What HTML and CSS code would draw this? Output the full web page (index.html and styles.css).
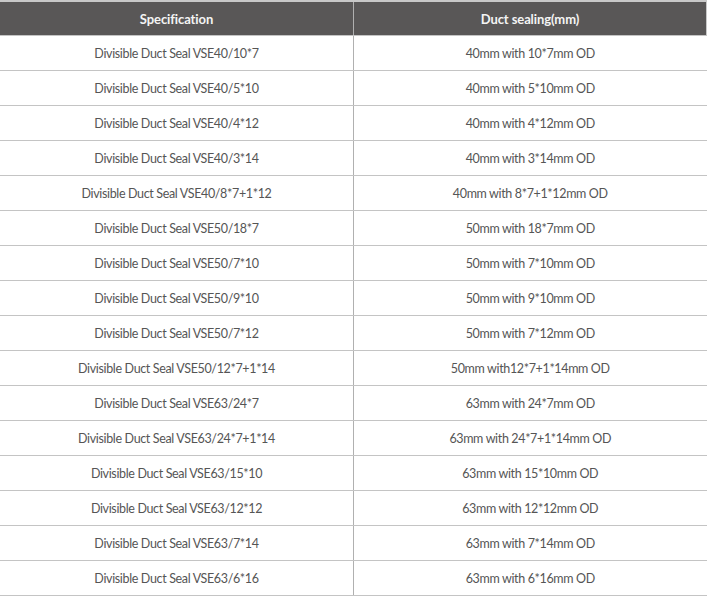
FILE: index.html
```html
<!DOCTYPE html>
<html>
<head>
<meta charset="utf-8">
<link rel="stylesheet" href="styles.css">
</head>
<body>
<table class="spec">
  <thead>
    <tr><th>Specification</th><th>Duct sealing(mm)</th></tr>
  </thead>
  <tbody>
    <tr><td>Divisible Duct Seal VSE40/10*7</td><td>40mm with 10*7mm OD</td></tr>
    <tr><td>Divisible Duct Seal VSE40/5*10</td><td>40mm with 5*10mm OD</td></tr>
    <tr><td>Divisible Duct Seal VSE40/4*12</td><td>40mm with 4*12mm OD</td></tr>
    <tr><td>Divisible Duct Seal VSE40/3*14</td><td>40mm with 3*14mm OD</td></tr>
    <tr><td>Divisible Duct Seal VSE40/8*7+1*12</td><td>40mm with 8*7+1*12mm OD</td></tr>
    <tr><td>Divisible Duct Seal VSE50/18*7</td><td>50mm with 18*7mm OD</td></tr>
    <tr><td>Divisible Duct Seal VSE50/7*10</td><td>50mm with 7*10mm OD</td></tr>
    <tr><td>Divisible Duct Seal VSE50/9*10</td><td>50mm with 9*10mm OD</td></tr>
    <tr><td>Divisible Duct Seal VSE50/7*12</td><td>50mm with 7*12mm OD</td></tr>
    <tr><td>Divisible Duct Seal VSE50/12*7+1*14</td><td>50mm with12*7+1*14mm OD</td></tr>
    <tr><td>Divisible Duct Seal VSE63/24*7</td><td>63mm with 24*7mm OD</td></tr>
    <tr><td>Divisible Duct Seal VSE63/24*7+1*14</td><td>63mm with 24*7+1*14mm OD</td></tr>
    <tr><td>Divisible Duct Seal VSE63/15*10</td><td>63mm with 15*10mm OD</td></tr>
    <tr><td>Divisible Duct Seal VSE63/12*12</td><td>63mm with 12*12mm OD</td></tr>
    <tr><td>Divisible Duct Seal VSE63/7*14</td><td>63mm with 7*14mm OD</td></tr>
    <tr><td>Divisible Duct Seal VSE63/6*16</td><td>63mm with 6*16mm OD</td></tr>
  </tbody>
</table>
</body>
</html>
```
FILE: styles.css
```css
html, body {
  margin: 0;
  padding: 0;
  background: #ffffff;
}
.spec {
  width: 707px;
  border-collapse: collapse;
  table-layout: fixed;
  font-family: Lato, "Noto Sans", sans-serif;
  font-size: 12.5px;
  letter-spacing: -0.35px;
  color: #555555;
}
.spec th, .spec td {
  height: 34px;
  padding: 0;
  text-align: center;
  vertical-align: middle;
  border-bottom: 1px solid #c4c4c4;
}
.spec th:first-child, .spec td:first-child {
  width: 353px;
  border-right: 1px solid #b0b0b0;
}
.spec thead th {
  background: #595757;
  color: #f4f4f4;
  font-size: 13px;
  font-weight: 700;
  letter-spacing: -0.1px;
  border-top: 2px solid #c8c8c8;
  height: 33px;
}
.spec thead th:last-child {
  border-right: 1px solid #c8c8c8;
}
```
